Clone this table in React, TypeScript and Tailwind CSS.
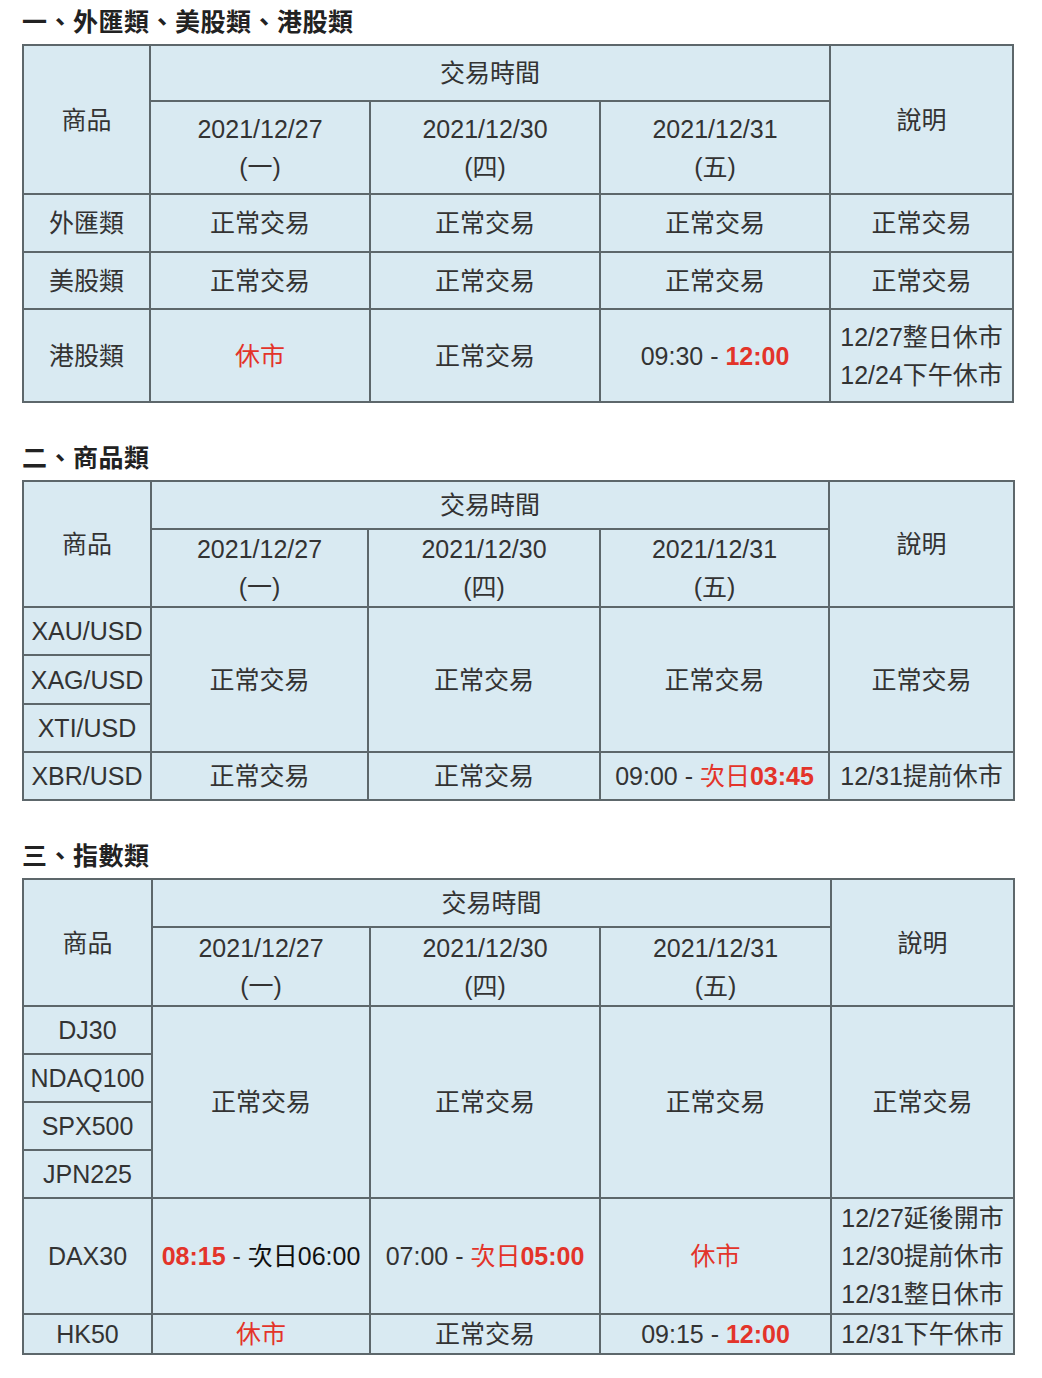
import React from 'react';

type Cell = {
  content: React.ReactNode;
  rowSpan?: number;
  colSpan?: number;
};

type Row = { h: number; cells: Cell[] };

const Red: React.FC<{ children: React.ReactNode; bold?: boolean }> = ({ children, bold }) => (
  <span className={bold ? 'font-bold text-[#e3342a]' : 'text-[#e3342a]'}>{children}</span>
);

const normal: Cell = { content: '正常交易' };

const headerRows = (h1: number, h2: number): Row[] => [
  {
    h: h1,
    cells: [
      { content: '商品', rowSpan: 2 },
      { content: '交易時間', colSpan: 3 },
      { content: '說明', rowSpan: 2 },
    ],
  },
  {
    h: h2,
    cells: [
      { content: <>2021/12/27<br />(一)</> },
      { content: <>2021/12/30<br />(四)</> },
      { content: <>2021/12/31<br />(五)</> },
    ],
  },
];

const fxRows: Row[] = [
  ...headerRows(56, 93),
  { h: 58, cells: [{ content: '外匯類' }, normal, normal, normal, normal] },
  { h: 57, cells: [{ content: '美股類' }, normal, normal, normal, normal] },
  {
    h: 93,
    cells: [
      { content: '港股類' },
      { content: <Red>休市</Red> },
      normal,
      { content: <>09:30 - <Red bold>12:00</Red></> },
      { content: <>12/27整日休市<br />12/24下午休市</> },
    ],
  },
];

const commodityRows: Row[] = [
  ...headerRows(48, 77),
  {
    h: 48,
    cells: [
      { content: 'XAU/USD' },
      { content: '正常交易', rowSpan: 3 },
      { content: '正常交易', rowSpan: 3 },
      { content: '正常交易', rowSpan: 3 },
      { content: '正常交易', rowSpan: 3 },
    ],
  },
  { h: 49, cells: [{ content: 'XAG/USD' }] },
  { h: 48, cells: [{ content: 'XTI/USD' }] },
  {
    h: 48,
    cells: [
      { content: 'XBR/USD' },
      normal,
      normal,
      { content: <>09:00 - <Red>次日<b>03:45</b></Red></> },
      { content: '12/31提前休市' },
    ],
  },
];

const indexRows: Row[] = [
  ...headerRows(48, 79),
  {
    h: 48,
    cells: [
      { content: 'DJ30' },
      { content: '正常交易', rowSpan: 4 },
      { content: '正常交易', rowSpan: 4 },
      { content: '正常交易', rowSpan: 4 },
      { content: '正常交易', rowSpan: 4 },
    ],
  },
  { h: 48, cells: [{ content: 'NDAQ100' }] },
  { h: 48, cells: [{ content: 'SPX500' }] },
  { h: 48, cells: [{ content: 'JPN225' }] },
  {
    h: 116,
    cells: [
      { content: 'DAX30' },
      { content: <><Red bold>08:15</Red> - <span className="text-[#111]">次日06:00</span></> },
      { content: <>07:00 - <Red>次日<b>05:00</b></Red></> },
      { content: <Red>休市</Red> },
      { content: <>12/27延後開市<br />12/30提前休市<br />12/31整日休市</> },
    ],
  },
  {
    h: 40,
    cells: [
      { content: 'HK50' },
      { content: <Red>休市</Red> },
      normal,
      { content: <>09:15 - <Red bold>12:00</Red></> },
      { content: '12/31下午休市' },
    ],
  },
];

const ScheduleTable: React.FC<{ title: string; rows: Row[]; cols: number[] }> = ({ title, rows, cols }) => (
  <section>
    <h2 className="h-[44px] leading-[44px] text-[25px] font-bold tracking-[0.5px] text-[#222]">{title}</h2>
    <table
      className="table-fixed border-collapse border-2 border-[#8a979b] bg-[#d9eaf2]"
      style={{ width: cols.reduce((a, b) => a + b, 0) }}
    >
      <colgroup>
        {cols.map((w, i) => (
          <col key={i} style={{ width: w }} />
        ))}
      </colgroup>
      <tbody>
        {rows.map((row, ri) => (
          <tr key={ri} style={{ height: row.h }}>
            {row.cells.map((c, ci) => (
              <td
                key={ci}
                rowSpan={c.rowSpan}
                colSpan={c.colSpan}
                className="border-2 border-[#5d676b] p-0 text-center align-middle whitespace-nowrap leading-[38px]"
              >
                {c.content}
              </td>
            ))}
          </tr>
        ))}
      </tbody>
    </table>
  </section>
);

export default function App() {
  return (
    <div className="min-h-[1378px] bg-white pl-[22px] text-[25px] text-[#333] font-['Liberation_Sans','Noto_Sans_CJK_TC',sans-serif]">
      <div className="flex flex-col gap-[33px]">
        <ScheduleTable title="一、外匯類、美股類、港股類" rows={fxRows} cols={[127, 220, 230, 230, 183]} />
        <ScheduleTable title="二、商品類" rows={commodityRows} cols={[128, 217, 232, 229, 185]} />
        <ScheduleTable title="三、指數類" rows={indexRows} cols={[129, 218, 230, 231, 183]} />
      </div>
    </div>
  );
}
